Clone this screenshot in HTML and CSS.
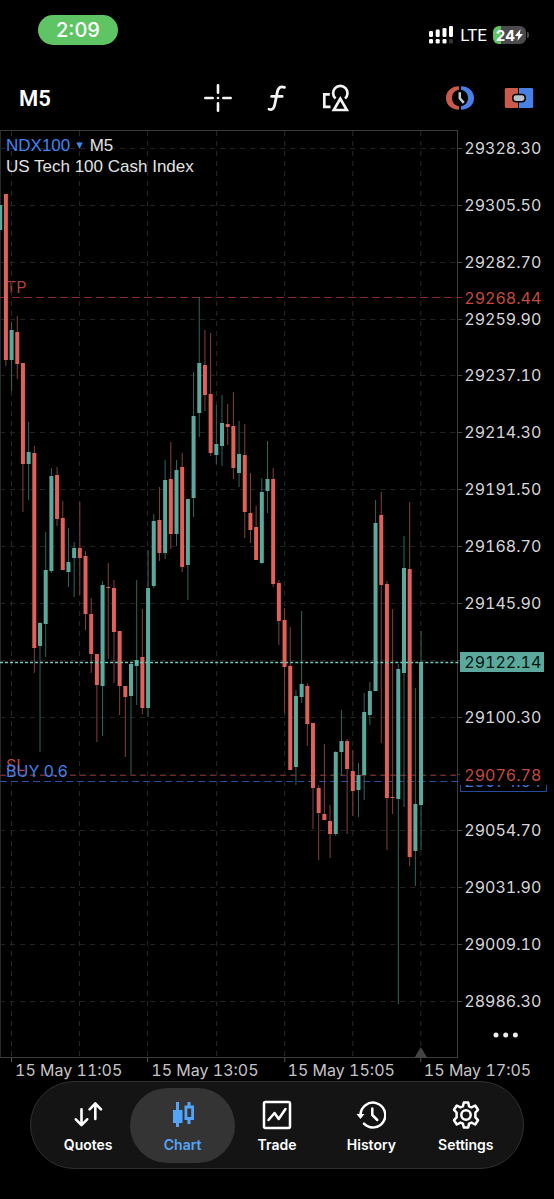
FILE: index.html
```html
<!DOCTYPE html>
<html lang="en">
<head>
<meta charset="utf-8">
<meta name="viewport" content="width=device-width, initial-scale=1">
<title>NDX100 M5</title>
<link rel="stylesheet" href="styles.css">
</head>
<body>
<div class="app">
  <header class="status">
    <time class="clock">2:09</time>
    <div class="radio">
      <svg class="signal" viewBox="0 0 26 18" aria-hidden="true">
        <g fill="#fff">
          <rect x="1" y="5" width="4" height="6" rx="1.3"/><rect x="7.700" y="3.600" width="4" height="7.400" rx="1.300"/>
          <rect x="14.500" y="2" width="4" height="9" rx="1.300"/><rect x="21" y="0" width="4" height="11" rx="1.300"/>
          <rect x="1" y="13" width="4" height="4.500" rx="1.300"/><rect x="7.700" y="13" width="4" height="4.500" rx="1.300"/>
          <rect x="14.500" y="13" width="4" height="4.500" rx="1.300"/>
        </g>
        <rect x="21" y="13" width="4" height="4.500" rx="1.300" fill="#333"/>
      </svg>
      <span class="net">LTE</span>
      <span class="battery"><span>24</span><svg viewBox="0 0 8 12" width="8" height="12" aria-hidden="true"><path d="M5.600 0 0 7h3.300L2.400 12 8 5H4.700z" fill="#fff"/></svg></span>
    </div>
  </header>

  <div class="toolbar">
    <button class="timeframe">M5</button>
    <div class="tools">
      <button aria-label="Crosshair"><svg viewBox="0 0 30 30"><g stroke="#f4f4f4" stroke-width="2.600" stroke-linecap="round"><path d="M15 2.300v7.400M15 20.300v7.400M2.300 15h7.400M20.300 15h7.400"/></g><circle cx="15" cy="15" r="1.300" fill="#f4f4f4"/></svg></button>
      <button aria-label="Indicators"><svg viewBox="0 0 30 30"><path d="M7 26.200c3.400 1.200 4.900-.8 5.700-4.400l2.500-12.200c.9-4.600 3-6.700 7.300-5.200M9.600 13.400h10.600" fill="none" stroke="#f4f4f4" stroke-width="2.800" stroke-linecap="round"/></svg></button>
      <button aria-label="Objects"><svg viewBox="0 0 30 30"><g fill="none" stroke="#f4f4f4" stroke-width="2.700"><path d="M8.800 11.300H3.300v12.500h6.200"/><path d="M14.600 15.600a7.200 7.200 0 1 1 9.400 0"/><path d="M19.300 15.700 12.800 27h13z"/></g></svg></button>
    </div>
    <div class="actions">
      <button aria-label="Market watch"><svg viewBox="0 0 30 30"><path d="M14 3.300C6.500 3.300 1 8.200 1 15s5.500 11.700 13 11.700v-3.500c-4.200-.6-7-3.800-7-8.200s2.800-7.600 7-8.200z" fill="#cb5a4c"/><path d="M16 3.300C23.500 3.300 29 8.200 29 15s-5.500 11.700-13 11.700v-3.500c4.200-.6 7-3.800 7-8.200s-2.800-7.600-7-8.200z" fill="#4880e6"/><path d="M14.800 9.300v6l4 4.500" fill="none" stroke="#c3cad2" stroke-width="2.500"/></svg></button>
      <button aria-label="One click trading"><svg viewBox="0 0 30 30"><path d="M2.300 5H14v20H2.300a1.500 1.500 0 0 1-1.500-1.500v-17A1.500 1.500 0 0 1 2.300 5z" fill="#cb5a4c"/><path d="M15 5h12.700a1.500 1.500 0 0 1 1.500 1.500v17a1.500 1.500 0 0 1-1.500 1.500H15z" fill="#4880e6"/><rect x="8.800" y="11.500" width="12.400" height="7.200" rx="3.200" fill="#b9c2cc" stroke="#000" stroke-width="1.500"/></svg></button>
    </div>
  </div>

  <main class="chart">
    <section class="plot" aria-label="NDX100 price chart">
      <span class="level tp">TP</span>
      <span class="level sl">SL</span>
      <svg class="candles" id="candles" viewBox="0 130 458 928" preserveAspectRatio="none" aria-hidden="true"></svg>
      <span class="level buy">BUY 0.6</span>
      <div class="title">
        <div class="symbol"><a href="#symbol">NDX100 <svg width="7" height="7" viewBox="0 0 7 7" aria-hidden="true"><path d="M.3.500h6.400L3.500 7z" fill="#3f86f5"/></svg></a> M5</div>
        <div>US Tech 100 Cash Index</div>
      </div>
    </section>
    <aside class="prices">
      <ol>
        <li>29328.30</li><li>29305.50</li><li>29282.70</li><li>29259.90</li><li>29237.10</li><li>29214.30</li><li>29191.50</li><li>29168.70</li><li>29145.90</li><li></li><li>29100.30</li><li></li><li>29054.70</li><li>29031.90</li><li>29009.10</li><li>28986.30</li>
      </ol>
      <span class="tag take">29268.44</span>
      <span class="tag last">29122.14</span>
      <span class="tag entry">29074.64</span>
      <span class="tag stop">29076.78</span>
      <button class="more" aria-label="More"><svg viewBox="0 0 26 6" width="26" height="6"><g fill="#eee"><circle cx="3" cy="3" r="2.500"/><circle cx="12.700" cy="3" r="2.500"/><circle cx="22.400" cy="3" r="2.500"/></g></svg></button>
    </aside>
  </main>

  <ol class="times"><li>15 May 11:05</li><li>15 May 13:05</li><li>15 May 15:05</li><li>15 May 17:05</li></ol>

  <nav class="tabs">
    <a href="#quotes"><svg viewBox="0 0 30 30"><path d="M8.500 9.200v15.500M2.800 19.300l5.700 5.800 5.700-5.800M22.300 19V3.800M16.600 9.300l5.700-5.800L28 9.300" fill="none" stroke="#fff" stroke-width="2.600" stroke-linecap="round" stroke-linejoin="round"/></svg>Quotes</a>
    <a href="#chart" class="active" aria-current="page"><svg viewBox="0 0 30 30"><g fill="#54a5f7"><path d="M8 2h3v8h3.500v13H11v4H8v-4H5V10h3z"/><path fill-rule="evenodd" d="M19.500 2h3v3.500H26V20h-3.500v4h-3v-4H16.500V5.500h3zM19.300 8.500v8.600h3.900V8.500z"/></g></svg>Chart</a>
    <a href="#trade"><svg viewBox="0 0 30 30"><g fill="none" stroke="#fff" stroke-width="2.500" stroke-linejoin="round" stroke-linecap="round"><rect x="2" y="2" width="26" height="26" rx="1.500"/><path d="m6.500 20 6-7 4.200 6L23.500 9"/></g></svg>Trade</a>
    <a href="#history"><svg viewBox="0 0 30 30"><g fill="none" stroke="#fff" stroke-width="2.500" stroke-linecap="round" stroke-linejoin="round"><path d="M4.500 15A12.400 12.400 0 1 1 8 23.700"/><path d="M16.300 8.500V15l5 5"/></g><path d="M.5 14h8l-4 5z" fill="#fff"/></svg>History</a>
    <a href="#settings"><svg viewBox="0 0 30 30"><g fill="none" stroke="#fff" stroke-width="2.500" stroke-linejoin="round"><path d="M12.800 2.500h4.400l.9 3.900 2.400 1 3.700-1.900 2.800 4.300-2.600 2.700v4.900l2.600 2.800-2.800 4.300-3.700-1.900-2.400 1-.9 3.900h-4.400l-.9-3.900-2.400-1-3.700 1.900L3 20.200l2.600-2.800v-4.900L3 9.800l2.800-4.300 3.700 1.900 2.400-1z"/><circle cx="15" cy="15" r="4.700"/></g></svg>Settings</a>
  </nav>
</div>
<script src="chart.js"></script>
</body>
</html>
```

FILE: styles.css
```css
* { box-sizing: border-box; }

body {
  margin: 0;
  background: #000;
  color: #fff;
  font-family: Inter, Roboto, sans-serif;
  font-size: 16px;
}

button {
  padding: 0;
  border: 0;
  background: none;
  color: inherit;
  font: inherit;
}

a { color: inherit; text-decoration: none; }
ol { margin: 0; padding: 0; list-style: none; }

.app {
  display: flex;
  flex-direction: column;
  min-height: 100vh;
  overflow: hidden;
}

.status {
  display: flex;
  justify-content: space-between;
  align-items: flex-start;
  padding: 15px 28px 0 38px;
  height: 66px;
}

.clock {
  padding: 0 18px;
  border-radius: 15px;
  background: #5fc463;
  font-size: 20px;
  font-weight: 500;
  line-height: 30px;
}

.radio {
  display: flex;
  align-items: center;
  gap: 6px;
  padding-top: 11px;
}

.signal { width: 26px; height: 18px; }
.net { font-family: Roboto, sans-serif; font-size: 17px; line-height: 18px; }

.battery {
  position: relative;
  display: flex;
  align-items: center;
  justify-content: center;
  width: 33px;
  height: 18px;
  border-radius: 6px;
  background: linear-gradient(to right, #5fc463 25%, #4b4b4d 25%);
  font-size: 15px;
  font-weight: 700;
}

.battery svg { flex: none; }

.battery::after {
  content: "";
  position: absolute;
  left: 100%;
  margin-left: 1px;
  width: 2px;
  height: 6px;
  border-radius: 0 2px 2px 0;
  background: #4b4b4d;
}

.toolbar {
  display: grid;
  grid-template-columns: 1fr auto 1fr;
  align-items: center;
  height: 64px;
  padding: 0 20px 0 19px;
}

.toolbar svg { display: block; width: 30px; height: 30px; }

.timeframe {
  justify-self: start;
  font-family: Roboto, sans-serif;
  font-size: 22px;
  font-weight: 600;
}

.tools, .actions { display: flex; gap: 29px; }
.actions { justify-content: flex-end; }

.chart {
  display: flex;
  flex: 1;
  min-height: 600px;
}

.plot {
  position: relative;
  flex: 458;
  border: 1px solid #3c3c3e;
  border-left-color: #2a2a2c;
}

.candles {
  position: absolute;
  top: -1px;
  left: -1px;
  width: calc(100% + 2px);
  height: calc(100% + 2px);
  overflow: visible;
}

.title {
  position: relative;
  padding: 4px 5px;
  color: #e2e2e2;
  font-family: "Liberation Sans", sans-serif;
  font-size: 17px;
  line-height: 21px;
}

.symbol a { color: #3f86f5; }
.symbol svg { margin: 0 2px 2px 1px; vertical-align: middle; }

.level {
  position: absolute;
  left: 5px;
  line-height: 20px;
}

.tp { top: 15.800%; color: #a9443a; }
.sl { top: 67.400%; color: #c4493e; }
.buy { top: 68%; color: #4080ea; }

.prices {
  position: relative;
  flex: 96;
  color: #d6d6d8;
  font-variant-numeric: tabular-nums;
}

.prices ol {
  display: flex;
  flex-direction: column;
  justify-content: space-between;
  height: 100%;
  padding: 9px 0 48px 6px;
}

.prices li { height: 18px; line-height: 18px; }

.tag {
  position: absolute;
  left: 2px;
  width: 84px;
  padding: 0 4px;
  line-height: 20px;
}

.take { top: 17%; color: #c4493e; }
.last { top: 56.300%; background: #5aa99c; color: #061512; }
.entry { top: 69%; width: 87px; padding: 0 3px; border: 1px solid #274a9a; color: #3f78e0; }
.stop { top: 68.400%; width: 87px; background: #000; color: #c4493e; }

.more {
  position: absolute;
  bottom: 20px;
  left: 35px;
  display: flex;
}

.times {
  display: grid;
  grid-template-columns: repeat(4, 24.600%);
  height: 23px;
  color: #c4c4c6;
  font-variant-numeric: tabular-nums;
  line-height: 24px;
  white-space: nowrap;
}

.times li { padding-left: 15px; }

.tabs {
  display: grid;
  grid-template-columns: repeat(5, 1fr);
  margin: 0 30px 30px;
  padding: 6px 10px 5px;
  border: 1px solid #303032;
  border-radius: 44px;
  background: #141414;
}

.tabs a {
  display: flex;
  flex-direction: column;
  align-items: center;
  gap: 5px;
  margin: 0 -5px;
  padding: 12px 0 8px;
  border-radius: 38px;
  font-size: 14px;
  font-weight: 600;
  line-height: 20px;
}

.tabs svg { width: 30px; height: 30px; }
.tabs .active { background: #343434; color: #54a5f7; }
```

FILE: chart.js
```js
// Each candle: direction (1 up, 0 down), wick top, body top, body bottom, wick bottom.
const candles = [
  [1,205,205,230,230],[0,194,194,360,366],[1,322,330,360,391],[0,316,332,364,379],[0,363,363,464,512],
  [1,422,452,464,500],[0,446,453,648,673],[1,622,623,646,752],[1,532,570,624,657],[1,468,476,571,573],
  [0,467,475,519,526],[0,501,518,570,570],[1,528,562,572,587],[1,542,548,558,597],[0,502,548,558,595],
  [0,551,556,614,630],[0,598,614,654,673],[0,654,654,685,742],[1,581,585,686,736],[0,563,587,588,659],
  [0,580,588,632,683],[0,631,631,686,715],[0,686,686,697,757],[1,663,664,696,774],[1,580,660,666,705],
  [0,609,657,708,714],[1,550,588,708,717],[1,514,521,586,588],[0,487,520,553,561],[1,460,480,553,559],
  [0,442,479,534,549],[1,460,470,534,546],[0,453,467,567,572],[1,499,499,565,600],[1,372,416,498,517],
  [1,297,363,413,437],[0,330,365,395,411],[0,333,394,453,456],[1,405,444,455,464],[1,395,423,446,466],
  [0,404,424,427,445],[0,392,426,468,479],[1,421,454,473,487],[0,424,455,512,538],[0,473,513,530,543],
  [0,506,527,560,560],[1,478,492,563,564],[1,441,479,491,513],[0,468,479,584,587],[0,580,583,621,645],
  [0,608,620,667,713],[0,627,666,770,770],[1,690,696,767,785],[1,611,684,697,703],[0,683,686,724,746],
  [0,723,723,788,829],[0,785,788,813,860],[0,744,814,820,820],[0,805,821,834,858],[1,751,752,834,836],
  [1,710,741,752,776],[0,739,741,769,834],[0,750,771,791,816],[1,763,775,790,817],[1,693,712,775,800],
  [1,682,691,715,725],[1,500,523,691,691],[0,492,515,585,743],[0,581,584,798,850],[0,609,797,798,814],
  [1,664,669,799,1004],[1,536,568,673,807],[0,502,569,857,866],[1,688,804,851,886],[1,631,662,805,850]
];

const svg = document.getElementById("candles");
const parts = [];
const line = (x1, y1, x2, y2, color, dash, width = 1) =>
  parts.push(`<line x1="${x1}" y1="${y1}" x2="${x2}" y2="${y2}" stroke="${color}" stroke-width="${width}" stroke-dasharray="${dash}"/>`);

// Grid and axis ticks
for (let i = 0; i < 16; i++) {
  const y = Math.round(148 + i * 56.87) + 0.5;
  line(0, y, 457, y, "#232325", "5 5");
  line(457, y, 462, y, "#444", "none");
}
for (let i = 0; i < 7; i++) {
  const x = Math.floor(11.5 + i * 68.2) + 0.5;
  line(x, 131, x, 1057, "#28282a", "5 5");
  if (i % 2 === 0) line(x, 1058, x, 1062, "#555", "none");
}

// Take profit, stop loss and entry levels
line(0, 297.5, 462, 297.5, "#8a2a22", "8 4");
line(0, 775.5, 462, 775.5, "#7a2620", "6 4");
line(0, 781.5, 462, 781.5, "#2450a0", "7 4");

candles.forEach(([up, high, top, bottom, low], i) => {
  const x = 0.2 + i * 5.683;
  line(x, high, x, low, up ? "#2f665e" : "#84403c", "none");
  parts.push(`<rect x="${x - 2}" y="${top}" width="4" height="${bottom - top}" fill="${up ? "#5aa99c" : "#e0605a"}"/>`);
});

line(0, 662.5, 460, 662.5, "#72c9bb", "3 2", 1.5);
parts.push('<path d="M420.500 1047 427 1058h-13z" fill="#444"/>');
svg.innerHTML = parts.join("");
```
